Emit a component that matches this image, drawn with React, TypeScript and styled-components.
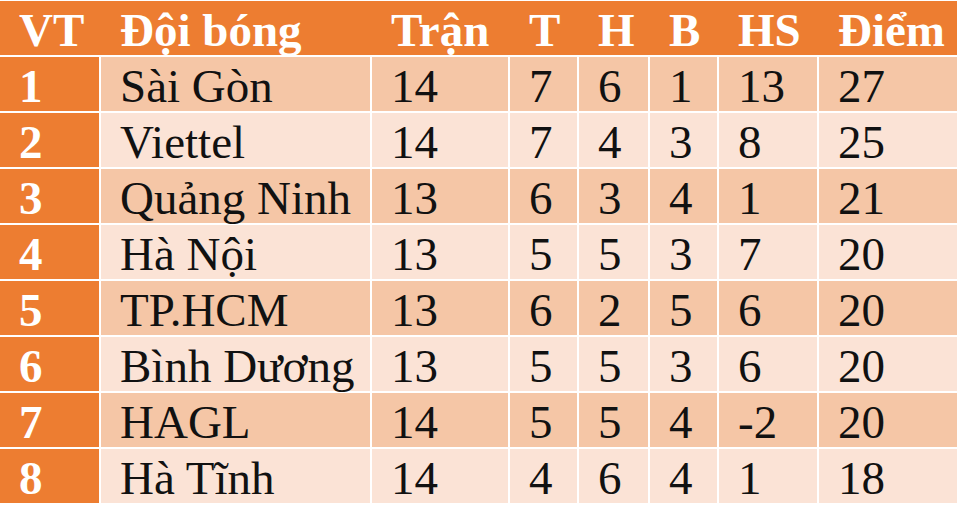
import React from "react";
import styled, { createGlobalStyle } from "styled-components";

const GlobalStyle = createGlobalStyle`
  html, body {
    margin: 0;
    padding: 0;
    background: #fff;
  }
  body {
    font-family: "Liberation Serif", "Times New Roman", serif;
  }
`;

// widths measured off the original table, gap of 2px between columns
const COLUMNS = "99px 269px 136px 67px 69px 67px 98px 138px";

const Page = styled.div`
  width: 960px;
  height: 510px;
  padding-top: 1px;
  box-sizing: border-box;
  background: #fff;
`;

const Table = styled.div`
  display: grid;
  row-gap: 2px;
  width: 957px;
`;

const HeaderRow = styled.div`
  display: grid;
  grid-template-columns: ${COLUMNS};
  column-gap: 2px;
  height: 54px;
  background: #ed7d31;
`;

const BodyRow = styled.div`
  display: grid;
  grid-template-columns: ${COLUMNS};
  column-gap: 2px;
  height: 54px;
`;

const HeadCell = styled.div`
  padding: 4px 0 0 19px;
  font-size: 47px;
  line-height: 50px;
  font-weight: bold;
  color: #fff;
  white-space: nowrap;
`;

const RankCell = styled.div`
  background: #ed7d31;
  padding: 4px 0 0 19px;
  font-size: 47px;
  line-height: 50px;
  font-weight: bold;
  color: #fff;
`;

const Cell = styled.div<{ $odd: boolean }>`
  background: ${({ $odd }) => ($odd ? "#f5c6a6" : "#fbe3d6")};
  padding: 4px 0 0 19px;
  font-size: 47px;
  line-height: 50px;
  color: #111;
  white-space: nowrap;
`;

const headers = ["VT", "Đội bóng", "Trận", "T", "H", "B", "HS", "Điểm"];

const rows: [string, number, number, number, number, number, number][] = [
  ["Sài Gòn", 14, 7, 6, 1, 13, 27],
  ["Viettel", 14, 7, 4, 3, 8, 25],
  ["Quảng Ninh", 13, 6, 3, 4, 1, 21],
  ["Hà Nội", 13, 5, 5, 3, 7, 20],
  ["TP.HCM", 13, 6, 2, 5, 6, 20],
  ["Bình Dương", 13, 5, 5, 3, 6, 20],
  ["HAGL", 14, 5, 5, 4, -2, 20],
  ["Hà Tĩnh", 14, 4, 6, 4, 1, 18],
];

export default function App() {
  return (
    <>
      <GlobalStyle />
      <Page>
        <Table>
          <HeaderRow>
            {headers.map((h) => (
              <HeadCell key={h}>{h}</HeadCell>
            ))}
          </HeaderRow>
          {rows.map((r, i) => (
            <BodyRow key={r[0]}>
              <RankCell>{i + 1}</RankCell>
              {r.map((v, j) => (
                <Cell key={j} $odd={i % 2 === 0}>
                  {v}
                </Cell>
              ))}
            </BodyRow>
          ))}
        </Table>
      </Page>
    </>
  );
}
